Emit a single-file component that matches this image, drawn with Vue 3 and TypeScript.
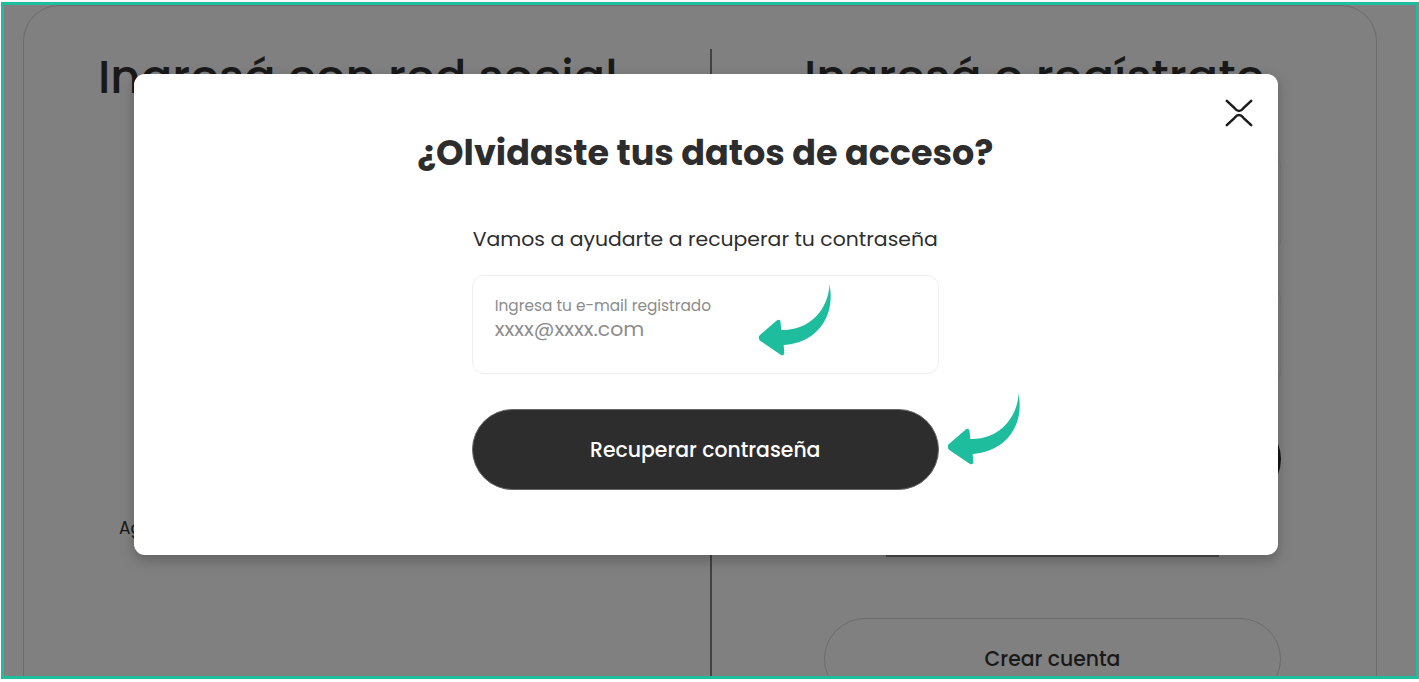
<script setup lang="ts">
import { ref } from 'vue';

const email = ref('');
const open = ref(true);
const sent = ref(false);

const arrows = ['arrow-field', 'arrow-submit'];

const close = () => {
    open.value = false;
};

const submit = () => {
    if (!email.value) return;
    sent.value = true;
};
</script>

<template>
    <div class="frame">
        <main class="card">
            <section class="column social">
                <h1>Ingresá con red social</h1>
                <p class="note">Ag</p>
            </section>
            <div class="divider"></div>
            <section class="column login">
                <h1>Ingresá o regístrate</h1>
                <div class="box"></div>
                <div class="box second"></div>
                <div class="pill dark"></div>
                <div class="underline"></div>
                <button type="button" class="pill outline">Crear cuenta</button>
            </section>
        </main>

        <div v-if="open" class="overlay">
            <form class="modal" novalidate @submit.prevent="submit">
                <button type="button" class="close" aria-label="Cerrar" @click="close">
                    <svg viewBox="0 0 28 28" width="28" height="28">
                        <path d="M1.8 1.8 L9.6 9.2 Q14 14.8 18.4 9.2 L26.2 1.8" />
                        <path d="M1.8 26.2 L9.6 18.8 Q14 13.4 18.4 18.8 L26.2 26.2" />
                    </svg>
                </button>
                <h2>¿Olvidaste tus datos de acceso?</h2>
                <p class="intro">Vamos a ayudarte a recuperar tu contraseña</p>
                <div class="field">
                    <label for="email">Ingresa tu e-mail registrado</label>
                    <input id="email" v-model="email" type="email" placeholder="xxxx@xxxx.com" />
                </div>
                <button type="submit" class="submit" :disabled="sent">Recuperar contraseña</button>
            </form>

            <svg v-for="name in arrows" :key="name" class="arrow" :class="name" viewBox="55 43 220 217">
                <path
                    d="M270 43 C266 124 205 184 125 181 L123 159 Q122 147 112 152 L60 197 Q54 205 61 213 L123 255 Q132 260 134 251 L132 226 C225 220 282 150 272 60 Z"
                />
            </svg>
        </div>
    </div>
</template>

<style>
body {
    margin: 0;
    background: #fff;
    overflow: hidden;
}
</style>

<style scoped>
* {
    box-sizing: border-box;
}

.frame {
    position: relative;
    height: 677px;
    margin: 2px 0 3px 1px;
    border: 3px solid #1dbd9e;
    background: #808080;
    overflow: hidden;
    font-family: Poppins, Inter, "Open Sans", sans-serif;
    color: #191919;
}

h1,
h2,
p {
    margin: 0;
    white-space: nowrap;
}

button {
    font: inherit;
    cursor: pointer;
}

.card {
    display: flex;
    width: 1354px;
    height: 760px;
    margin-left: 19px;
    border: 1px solid #6c6c6c;
    border-radius: 36px;
}

.column {
    display: flex;
    flex-direction: column;
    flex: none;
}

.social {
    width: 686px;
    padding: 41px 0 0 74px;
}

h1 {
    font-size: 46.7px;
    font-weight: 500;
    line-height: 60px;
}

.note {
    margin: 409px 0 0 21px;
    font-size: 17px;
    line-height: 24px;
}

.divider {
    flex: none;
    width: 2px;
    margin-top: 43px;
    background: #424242;
}

.login {
    width: 570px;
    padding: 41px 0 0 92px;
}

.box {
    width: 457px;
    height: 98px;
    margin: 47px 0 0 20px;
    border: 1px solid #797979;
    border-radius: 12px;
}

.box.second {
    margin-top: 34px;
}

.pill {
    flex: none;
    width: 457px;
    height: 82px;
    margin-left: 20px;
    border-radius: 41px;
}

.pill.dark {
    margin-top: 34px;
    background: #161616;
}

.underline {
    width: 333px;
    height: 2px;
    margin: 55px 0 0 82px;
    background: #4c4c4c;
}

.pill.outline {
    margin-top: 61px;
    padding: 0;
    border: 1px solid #6c6c6c;
    background: transparent;
    color: #191919;
    font-size: 20.4px;
    font-weight: 500;
}

.overlay {
    position: absolute;
    inset: 0;
}

.modal {
    position: relative;
    display: flex;
    flex-direction: column;
    align-items: center;
    width: 1143.5px;
    height: 480.5px;
    margin: 69px 0 0 130px;
    padding: 54px 1px 0 0;
    border-radius: 11px;
    background: #fff;
    box-shadow: 0 5px 14px rgba(0, 0, 0, 0.25);
    color: #2d2d2d;
}

.close {
    position: absolute;
    top: 24.5px;
    right: 24.5px;
    width: 28px;
    height: 28px;
    padding: 0;
    border: 0;
    background: none;
}

.close svg {
    display: block;
    fill: none;
    stroke: #1c1c1c;
    stroke-width: 2.5;
    stroke-linecap: round;
}

h2 {
    font-size: 35px;
    font-weight: 700;
    line-height: 50px;
}

.intro {
    margin-top: 46px;
    font-size: 20.4px;
    line-height: 30px;
}

.field {
    display: flex;
    flex-direction: column;
    align-items: flex-start;
    width: 467px;
    height: 99px;
    margin-top: 21px;
    padding: 19px 21px 18px 22px;
    border: 1px solid #eee;
    border-radius: 12px;
}

.field label {
    font-size: 15.35px;
    line-height: 22px;
    color: #8c8c8c;
    white-space: nowrap;
}

.field input {
    width: 230px;
    height: 24px;
    padding: 0;
    border: 0;
    outline: none;
    background: none;
    font-family: inherit;
    font-size: 20.4px;
}

.field input::placeholder {
    color: #8c8c8c;
    opacity: 1;
}

.submit {
    width: 467px;
    height: 81px;
    margin-top: 35px;
    padding: 0;
    border: 1px solid #666;
    border-radius: 41px;
    background: #2d2d2d;
    color: #fff;
    font-size: 20.4px;
    font-weight: 500;
}

.arrow {
    position: absolute;
    width: 73.3px;
    height: 72.3px;
    fill: #1dbd9e;
}

/* hints laid over the form */
.arrow-field {
    left: 754.3px;
    top: 279.3px;
}

.arrow-submit {
    left: 943.3px;
    top: 387.7px;
}
</style>
